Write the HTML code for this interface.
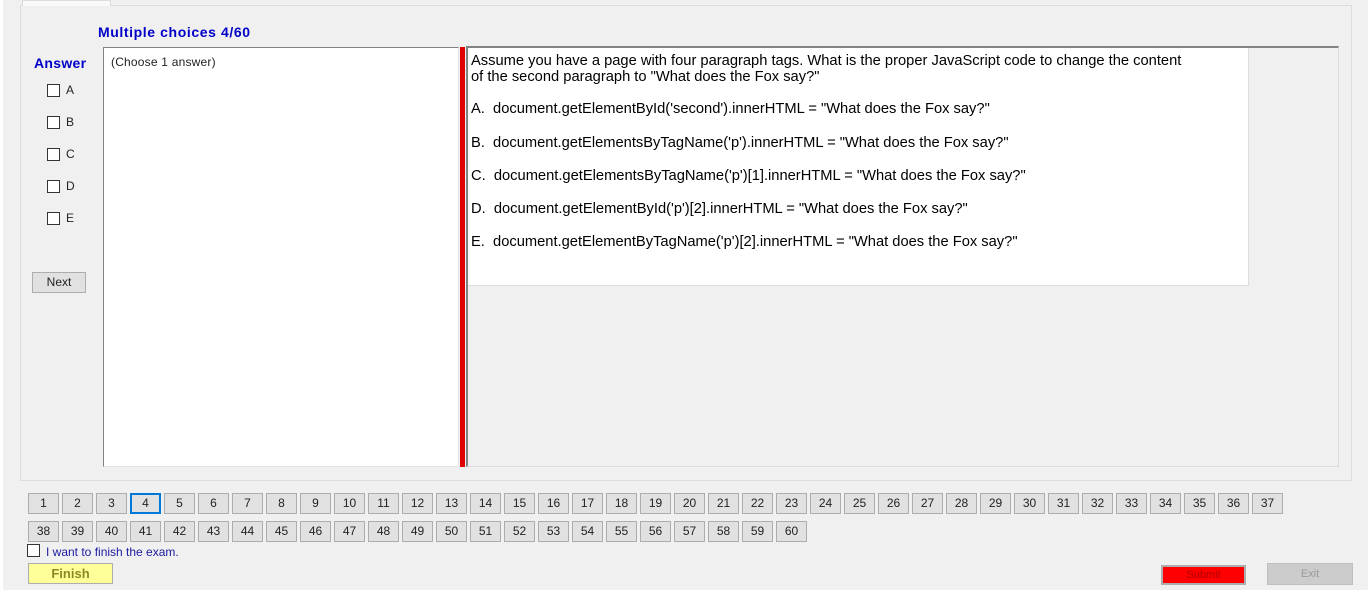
<!DOCTYPE html>
<html><head><meta charset="utf-8"><style>
*{margin:0;padding:0;box-sizing:border-box}
body{width:1372px;height:594px;background:#fff;position:relative;overflow:hidden;font-family:"Liberation Sans",Arial,sans-serif}
.a{position:absolute}
.bg{left:3px;top:0;width:1365px;height:590px;background:#f0f0f0}
.panel{left:20px;top:5px;width:1332px;height:476px;border:1px solid #dcdcdc;background:#f0f0f0}
.tab{left:22px;top:0;width:89px;height:6px;background:#f9f9f9;border:1px solid #dcdcdc;border-bottom:none}
.cb{width:13px;height:13px;border:1px solid #333;background:#fff}
.lbl{font-size:12px;color:#222}
.nb{width:31px;height:21px;background:#e1e1e1;border:1px solid #adadad;font-size:12px;color:#222;text-align:center;line-height:19px}
.q{font-size:14.7px;color:#000;left:471px;white-space:nowrap;line-height:16px}
</style></head><body>
<div class="a bg"></div>
<div class="a panel"></div>
<div class="a tab"></div>
<div class="a" style="left:98px;top:24px;font-size:14px;font-weight:bold;color:#0000c8;letter-spacing:0.6px">Multiple choices 4/60</div>
<div class="a" style="left:34px;top:55px;font-size:14px;font-weight:bold;color:#0000c8;letter-spacing:0.3px">Answer</div>
<div class="a cb" style="left:47px;top:84px"></div><div class="a lbl" style="left:66px;top:83px">A</div>
<div class="a cb" style="left:47px;top:116px"></div><div class="a lbl" style="left:66px;top:115px">B</div>
<div class="a cb" style="left:47px;top:148px"></div><div class="a lbl" style="left:66px;top:147px">C</div>
<div class="a cb" style="left:47px;top:180px"></div><div class="a lbl" style="left:66px;top:179px">D</div>
<div class="a cb" style="left:47px;top:212px"></div><div class="a lbl" style="left:66px;top:211px">E</div>
<div class="a" style="left:32px;top:272px;width:54px;height:21px;background:#e1e1e1;border:1px solid #adadad;font-size:12px;text-align:center;line-height:19px;color:#222">Next</div>
<div class="a" style="left:103px;top:47px;width:356px;height:420px;background:#fff;border:1px solid #828282;border-right-color:#e3e3e3;border-bottom-color:#e3e3e3"></div>
<div class="a" style="left:111px;top:55px;font-size:12px;color:#222;letter-spacing:0.2px">(Choose 1 answer)</div>
<div class="a" style="left:460px;top:47px;width:5px;height:420px;background:#e00000"></div>
<div class="a" style="left:466px;top:46px;width:873px;height:421px;border:1px solid #dcdcdc;border-top:2px solid #828282;border-left:2px solid #828282"></div>
<div class="a" style="left:468px;top:48px;width:781px;height:238px;background:#fff;border-right:1px solid #dcdcdc;border-bottom:1px solid #dcdcdc"></div>
<div class="a q" style="top:53px">Assume you have a page with four paragraph tags. What is the proper JavaScript code to change the content<br>of the second paragraph to "What does the Fox say?"</div>
<div class="a q" style="top:101px">A.&nbsp; document.getElementById('second').innerHTML = "What does the Fox say?"</div>
<div class="a q" style="top:135px">B.&nbsp; document.getElementsByTagName('p').innerHTML = "What does the Fox say?"</div>
<div class="a q" style="top:168px">C.&nbsp; document.getElementsByTagName('p')[1].innerHTML = "What does the Fox say?"</div>
<div class="a q" style="top:201px">D.&nbsp; document.getElementById('p')[2].innerHTML = "What does the Fox say?"</div>
<div class="a q" style="top:234px">E.&nbsp; document.getElementByTagName('p')[2].innerHTML = "What does the Fox say?"</div>
<div id="nums"></div>
<script>
var h='';for(var i=1;i<=60;i++){var r=i<=37?0:1,c=r?i-38:i-1;var x=28+c*34,y=r?521:493;
h+='<div class="a nb" style="left:'+x+'px;top:'+y+'px;'+(i==4?'border:2px solid #0078d7;line-height:17px;':'')+'">'+i+'</div>';}
document.getElementById('nums').innerHTML=h;
</script>
<div class="a cb" style="left:27px;top:544px"></div>
<div class="a" style="left:46px;top:545px;font-size:12px;color:#1a1aa0">I want to finish the exam.</div>
<div class="a" style="left:28px;top:563px;width:85px;height:21px;background:#ffff99;border:1px solid #adadad;font-size:13px;font-weight:bold;color:#8a8a20;text-align:center;line-height:19px">Finish</div>
<div class="a" style="left:1161px;top:565px;width:85px;height:20px;background:#ff0000;border:2px solid #adadad;font-size:11px;color:#b00000;text-align:center;line-height:16px">Submit</div>
<div class="a" style="left:1267px;top:563px;width:86px;height:22px;background:#cccccc;border:1px solid #bfbfbf;font-size:11px;color:#9a9a9a;text-align:center;line-height:20px">Exit</div>
</body></html>
